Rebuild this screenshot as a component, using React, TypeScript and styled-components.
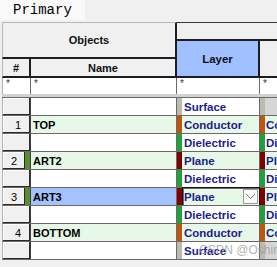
import React from "react";
import styled, { createGlobalStyle } from "styled-components";

const colors = {
  panel: "#f0f0f0",
  line: "#1e1e1e",
  grid: "#6a6a6a",
  rowGreen: "#e8f8e8",
  selected: "#a4c2ff",
  navy: "#1c1c8e",
};

const layerStyles: Record<string, { strip: string; bg: string }> = {
  Surface: { strip: "#bcbcae", bg: "#ffffff" },
  Conductor: { strip: "#c0560e", bg: colors.rowGreen },
  Dielectric: { strip: "#1fa23c", bg: "#ffffff" },
  Plane: { strip: "#800000", bg: colors.rowGreen },
};

type Row = {
  num: string;
  name: string;
  layer: string;
  marked?: boolean;
  selected?: boolean;
};

const rows: Row[] = [
  { num: "", name: "", layer: "Surface" },
  { num: "1", name: "TOP", layer: "Conductor" },
  { num: "", name: "", layer: "Dielectric" },
  { num: "2", name: "ART2", layer: "Plane", marked: true },
  { num: "", name: "", layer: "Dielectric" },
  { num: "3", name: "ART3", layer: "Plane", marked: true, selected: true },
  { num: "", name: "", layer: "Dielectric" },
  { num: "4", name: "BOTTOM", layer: "Conductor" },
  { num: "", name: "", layer: "Surface" },
];

const GlobalStyle = createGlobalStyle`
  body {
    margin: 0;
    background: ${colors.panel};
    font-family: "Liberation Sans", Arial, sans-serif;
    overflow: hidden;
  }
`;

export default function App() {
  return (
    <>
      <GlobalStyle />
      <Page>
        <TabBar>
          <Tab>Primary</Tab>
        </TabBar>
        <Sheet>
          <Header>
            <ObjectsHead>Objects</ObjectsHead>
            <GroupHead />
            <LayerHead>Layer</LayerHead>
            <NextHead />
            <HashHead>#</HashHead>
            <NameHead>Name</NameHead>
          </Header>
          <FilterRow>
            <FilterCell>*</FilterCell>
            <FilterCell>*</FilterCell>
            <FilterCell>*</FilterCell>
            <FilterCell $last>*</FilterCell>
          </FilterRow>
          <Band />
          <Body>
            {rows.map((row, i) => {
              const style = layerStyles[row.layer];
              const surface = row.layer === "Surface";
              return (
                <DataRow key={i}>
                  <RowHead>
                    <RowNum $marked={row.marked}>{row.num}</RowNum>
                    {row.marked && <Marker />}
                  </RowHead>
                  <NameCell
                    $bg={
                      row.selected
                        ? colors.selected
                        : row.name
                        ? colors.rowGreen
                        : "#ffffff"
                    }
                  >
                    {row.name}
                  </NameCell>
                  <LayerCell $bg={style.bg}>
                    <Strip $color={style.strip} />
                    {row.selected ? (
                      <Combo>
                        <ComboText>{row.layer}</ComboText>
                        <DropButton>
                          <svg width="11" height="7" viewBox="0 0 11 7">
                            <path
                              d="M1 1 L5.5 5.5 L10 1"
                              fill="none"
                              stroke="#707070"
                              strokeWidth="1"
                            />
                          </svg>
                        </DropButton>
                      </Combo>
                    ) : (
                      <LayerText>{row.layer}</LayerText>
                    )}
                  </LayerCell>
                  <LayerCell $bg={surface ? "#d6d6d6" : style.bg} $last>
                    <Strip $color={style.strip} />
                    {!surface && <EdgeText>{row.layer}</EdgeText>}
                  </LayerCell>
                </DataRow>
              );
            })}
          </Body>
        </Sheet>
        <Watermark>CSDN @Oshiro</Watermark>
      </Page>
    </>
  );
}

const Page = styled.div`
  position: relative;
  width: 277px;
  height: 267px;
  overflow: hidden;
  background: ${colors.panel};
`;

const TabBar = styled.div`
  display: flex;
  height: 20px;
  background: ${colors.panel};
`;

const Tab = styled.div`
  width: 72px;
  padding-left: 13px;
  background: #f9f9f9;
  font-family: "Liberation Mono", "DejaVu Sans Mono", monospace;
  font-size: 14px;
  line-height: 20px;
  color: #000;
`;

const Sheet = styled.div`
  margin: 2px 0 0 2px;
  display: flex;
  flex-direction: column;
`;

const columns = "29px 146px 83px 1fr";

const Header = styled.div`
  display: grid;
  grid-template-columns: ${columns};
  grid-template-rows: 19px 18px 19px;
  font-size: 11px;
  font-weight: 700;
  color: #111;
`;

const HeadCell = styled.div`
  display: flex;
  align-items: center;
  justify-content: center;
  background: ${colors.panel};
  border-right: 2px solid ${colors.line};
  border-bottom: 2px solid ${colors.line};
`;

const ObjectsHead = styled(HeadCell)`
  grid-column: 1 / 3;
  grid-row: 1 / 3;
  border-top: 1px solid #b8b8b8;
  border-left: 1px solid #b8b8b8;
`;

const GroupHead = styled(HeadCell)`
  grid-column: 3 / 5;
  grid-row: 1;
  border-top: 1px solid #3a3a3a;
  border-right: none;
`;

const LayerHead = styled(HeadCell)`
  grid-column: 3;
  grid-row: 2 / 4;
  padding-top: 1px;
  background: #a0c0ff;
  font-size: 11.5px;
`;

const NextHead = styled(HeadCell)`
  grid-column: 4;
  grid-row: 2 / 4;
  border-right: none;
`;

const HashHead = styled(HeadCell)`
  grid-column: 1;
  grid-row: 3;
  border-left: 1px solid #b8b8b8;
`;

const NameHead = styled(HeadCell)`
  grid-column: 2;
  grid-row: 3;
`;

const FilterRow = styled.div`
  display: grid;
  grid-template-columns: ${columns};
  height: 16px;
  background: #fff;
`;

const FilterCell = styled.div<{ $last?: boolean }>`
  padding: 1px 0 0 3px;
  font-size: 10px;
  line-height: 10px;
  color: #3a3060;
  border-left: 1px solid #b0b0b0;
  border-right: ${(p) => (p.$last ? "none" : "1px solid #6a6a6a")};
  &:nth-child(n + 2) {
    border-left: none;
  }
`;

const Band = styled.div`
  height: 3px;
  background: #d2d2d2;
`;

const Body = styled.div`
  display: flex;
  flex-direction: column;
  border-bottom: 1px solid ${colors.grid};
`;

const DataRow = styled.div`
  display: grid;
  grid-template-columns: ${columns};
  height: 17px;
  border-top: 1px solid ${colors.grid};
  font-size: 11px;
`;

const RowHead = styled.div`
  display: flex;
  background: #fff;
  border-left: 1px solid #b0b0b0;
  border-right: 1px solid #404040;
`;

const RowNum = styled.div<{ $marked?: boolean }>`
  flex: 1;
  display: flex;
  align-items: center;
  justify-content: center;
  padding-left: ${(p) => (p.$marked ? "0" : "3px")};
  background: ${colors.panel};
  box-shadow: inset -1px -1px 0 #2a2a2a, inset 1px 1px 0 #ffffff;
  color: #000;
`;

const Marker = styled.div`
  width: 5px;
  background: #5b8c34;
`;

const NameCell = styled.div<{ $bg: string }>`
  display: flex;
  align-items: center;
  padding-left: 2px;
  background: ${(p) => p.$bg};
  border-right: 1px solid ${colors.grid};
  font-weight: 700;
  color: #000;
`;

const LayerCell = styled.div<{ $bg: string; $last?: boolean }>`
  display: flex;
  align-items: stretch;
  min-width: 0;
  overflow: ${(p) => (p.$last ? "hidden" : "visible")};
  background: ${(p) => p.$bg};
  border-right: ${(p) => (p.$last ? "none" : `1px solid ${colors.grid}`)};
`;

const Strip = styled.div<{ $color: string }>`
  flex: none;
  width: 5px;
  background: ${(p) => p.$color};
`;

const LayerText = styled.div`
  display: flex;
  align-items: center;
  padding-left: 2px;
  white-space: nowrap;
  font-size: 11.5px;
  font-weight: 700;
  color: ${colors.navy};
`;

const EdgeText = styled(LayerText)`
  padding-left: 1px;
`;

const Combo = styled.div`
  flex: 1;
  display: flex;
  align-items: center;
  margin: -1px -1px -1px 0;
  background: ${colors.rowGreen};
  border: 1px solid #111;
  box-shadow: inset 1px 1px 0 #6a6a6a;
`;

const ComboText = styled(LayerText)`
  flex: 1;
  padding-left: 1px;
`;

const DropButton = styled.div`
  display: flex;
  align-items: center;
  justify-content: center;
  width: 13px;
  height: 13px;
  margin-right: 1px;
  background: #fafafa;
  border: 1px solid #9a9a9a;
`;

const Watermark = styled.div`
  position: absolute;
  left: 199px;
  top: 243px;
  font-size: 12px;
  white-space: nowrap;
  color: rgba(150, 150, 150, 0.75);
  pointer-events: none;
`;
